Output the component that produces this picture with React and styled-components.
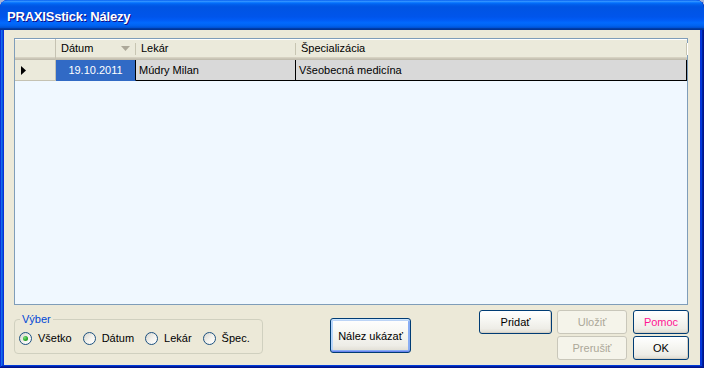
import React from 'react';
import styled, { createGlobalStyle, css } from 'styled-components';

const GlobalStyle = createGlobalStyle`
  html, body {
    margin: 0;
    padding: 0;
    background: #aab6d8;
  }
  body {
    width: 704px;
    height: 368px;
    overflow: hidden;
    font-family: "Liberation Sans", Arial, sans-serif;
    font-size: 11px;
  }
`;

const Window = styled.div`
  width: 704px;
  height: 368px;
  display: flex;
  flex-direction: column;
  border-radius: 8px 8px 0 0;
  overflow: hidden;
  background: #0831d9;
  box-shadow: inset -1px -1px #00138c, inset 1px 1px #0831d9,
    inset -2px -2px #001ea0, inset 2px 2px #166aee,
    inset -3px -3px #003bda, inset 3px 3px #0855dd;
`;

const TitleBar = styled.div`
  height: 30px;
  flex: none;
  display: flex;
  align-items: center;
  padding: 2px 0 0 7px;
  box-sizing: border-box;
  color: #fff;
  font-weight: bold;
  font-size: 13px;
  letter-spacing: -0.2px;
  text-shadow: 1px 1px 0 #0f1089;
  background: linear-gradient(
    180deg,
    #0058ee 0%,
    #3593ff 4%,
    #288eff 6%,
    #127dff 8%,
    #036ffc 10%,
    #0262ee 14%,
    #0057e5 20%,
    #0054e3 24%,
    #0055eb 56%,
    #005bf5 66%,
    #026afe 76%,
    #0062ef 86%,
    #0052d6 92%,
    #0040ab 94%,
    #003092 100%
  );
`;

const Client = styled.div`
  flex: 1;
  margin: 0 4px 3px 4px;
  padding: 8px 0 0 10px;
  background: #ece9d8;
  display: flex;
  flex-direction: column;
`;

const Table = styled.div`
  width: 674px;
  height: 267px;
  box-sizing: border-box;
  border: 1px solid #7f9db9;
  background: #f0f8ff;
  display: grid;
  grid-template-columns: 41px 80px 160px 391px;
  grid-template-rows: 21px 21px;
  align-content: start;
`;

const HeaderCell = styled.div`
  position: relative;
  display: flex;
  align-items: center;
  justify-content: space-between;
  padding: 0 6px 3px 5px;
  box-sizing: border-box;
  color: #000;
  background: #ebeadb;
  box-shadow: inset 0 1px #ffffff, inset 0 -1px #c1bdae, inset 0 -2px #cbc7b8,
    inset 0 -3px #d6d2c2;
  &::after {
    content: '';
    position: absolute;
    right: 0;
    top: 4px;
    width: 1px;
    height: 12px;
    background: #c7c5b2;
    box-shadow: 1px 0 #ffffff;
  }
  ${p =>
    p.$corner &&
    css`
      border-right: 1px solid #c5c2b2;
      &::after {
        display: none;
      }
    `}
`;

const SortGlyph = styled.svg`
  width: 9px;
  height: 5px;
  flex: none;
  margin-top: 1px;
`;

const RowHeader = styled.div`
  display: flex;
  align-items: center;
  padding-left: 6px;
  box-sizing: border-box;
  background: #ebeadb;
  border-right: 1px solid #c5c2b2;
  border-bottom: 1px solid #c5c2b2;
`;

const Cell = styled.div`
  display: flex;
  align-items: center;
  padding: 0 3px;
  box-sizing: border-box;
  white-space: nowrap;
  color: #000;
  background: #d9d9d9;
  border-right: 1px solid #000;
  border-bottom: 1px solid #000;
  ${p =>
    p.$current &&
    css`
      justify-content: center;
      color: #fff;
      background: #316ac5;
      border-bottom-color: #316ac5;
    `}
`;

const Footer = styled.div`
  display: flex;
  align-items: flex-start;
`;

const GroupBox = styled.fieldset`
  width: 249px;
  box-sizing: border-box;
  margin: 8px 0 0 0;
  padding: 6px 4px 8px 4px;
  border: 1px solid #d0d0bf;
  border-radius: 4px;
`;

const Legend = styled.legend`
  margin-left: 1px;
  padding: 0 2px;
  line-height: 13px;
  color: #0046d5;
`;

const RadioRow = styled.div`
  display: flex;
  gap: 11px;
`;

const RadioItem = styled.label`
  display: flex;
  align-items: center;
  gap: 6px;
  line-height: 13px;
  color: #000;
`;

const RadioCircle = styled.span`
  box-sizing: border-box;
  width: 13px;
  height: 13px;
  flex: none;
  border-radius: 50%;
  border: 1px solid #1c5180;
  background: linear-gradient(135deg, #d6d5ce 0%, #f4f3ee 55%, #ffffff 100%);
  display: flex;
  align-items: center;
  justify-content: center;
  ${p =>
    p.$checked &&
    css`
      &::after {
        content: '';
        width: 5px;
        height: 5px;
        border-radius: 50%;
        background: radial-gradient(circle at 35% 35%, #7fe07f 0%, #2aa82a 55%, #1a7d1a 100%);
      }
    `}
`;

const Button = styled.button`
  box-sizing: border-box;
  margin: 0;
  padding: 0;
  font-family: "Liberation Sans", Arial, sans-serif;
  font-size: 11px;
  color: ${p => p.$color || '#000'};
  border: 1px solid #003c74;
  border-radius: 3px;
  background: linear-gradient(180deg, #ffffff 0%, #f7f7f3 40%, #eeede7 80%, #dedbd0 100%);
  box-shadow: inset -1px -1px 0 #d6d0c5;
  grid-area: ${p => p.$area || 'auto'};
  &:disabled {
    border-color: #c9c7ba;
    color: #aca899;
    background: #f5f4ea;
    box-shadow: none;
  }
  ${p =>
    p.$focused &&
    css`
      box-shadow: inset 0 1px #cee7ff, inset 0 -1px #6982ee, inset 1px 0 #b8d6fb,
        inset -1px 0 #89adf4, inset 0 2px #bcd4f6, inset 0 -2px #89adf4,
        inset 2px 0 #b8d6fb, inset -2px 0 #89adf4;
    `}
`;

const ShowButton = styled(Button)`
  width: 81px;
  height: 35px;
  margin: 13px 0 0 67px;
`;

const ButtonPanel = styled.div`
  margin: 5px 0 0 68px;
  display: grid;
  grid-template-columns: 73px 5px 70px 6px 56px;
  grid-template-rows: 24px 24px;
  row-gap: 2px;
  grid-template-areas:
    'add . save . help'
    '. . cancel . ok';
`;

const columns = ['Dátum', 'Lekár', 'Špecializácia'];

const rows = [{ date: '19.10.2011', doctor: 'Múdry Milan', spec: 'Všeobecná medicína' }];

const filters = [
  { label: 'Všetko', checked: true },
  { label: 'Dátum' },
  { label: 'Lekár' },
  { label: 'Špec.' },
];

export default function App() {
  return (
    <>
      <GlobalStyle />
      <Window>
        <TitleBar>PRAXISstick: Nálezy</TitleBar>
        <Client>
          <Table>
            <HeaderCell $corner />
            {columns.map((c, i) => (
              <HeaderCell key={c}>
                <span>{c}</span>
                {i === 0 && (
                  <SortGlyph viewBox="0 0 9 5">
                    <polygon points="0,0 9,0 4.5,5" fill="#aca899" />
                  </SortGlyph>
                )}
              </HeaderCell>
            ))}
            {rows.map(r => (
              <React.Fragment key={r.date}>
                <RowHeader>
                  <svg width="5" height="9" viewBox="0 0 5 9">
                    <polygon points="0,0 5,4.5 0,9" fill="#000" />
                  </svg>
                </RowHeader>
                <Cell $current>{r.date}</Cell>
                <Cell>{r.doctor}</Cell>
                <Cell>{r.spec}</Cell>
              </React.Fragment>
            ))}
          </Table>
          <Footer>
            <GroupBox>
              <Legend>Výber</Legend>
              <RadioRow>
                {filters.map(f => (
                  <RadioItem key={f.label}>
                    <RadioCircle $checked={f.checked} />
                    {f.label}
                  </RadioItem>
                ))}
              </RadioRow>
            </GroupBox>
            <ShowButton $focused>Nález ukázať</ShowButton>
            <ButtonPanel>
              <Button $area="add">Pridať</Button>
              <Button $area="save" disabled>Uložiť</Button>
              <Button $area="help" $color="#ff1493">Pomoc</Button>
              <Button $area="cancel" disabled>Prerušiť</Button>
              <Button $area="ok">OK</Button>
            </ButtonPanel>
          </Footer>
        </Client>
      </Window>
    </>
  );
}
